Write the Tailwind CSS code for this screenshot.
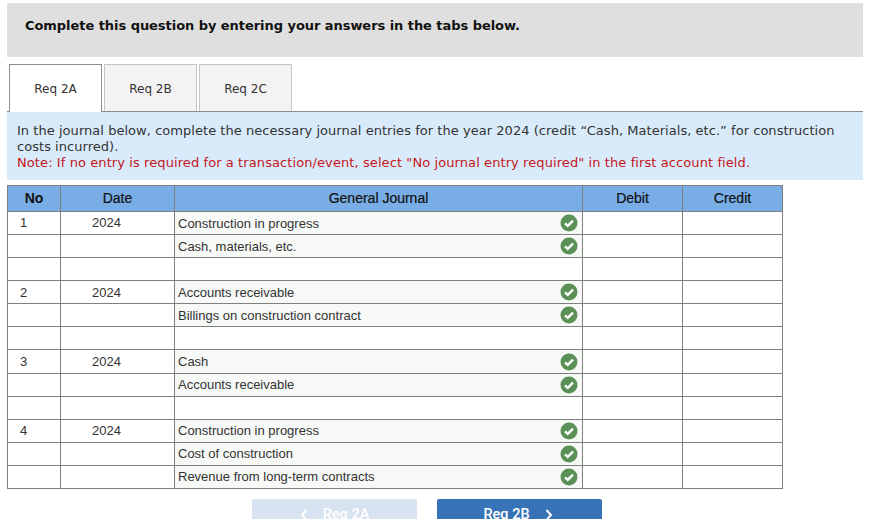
<!DOCTYPE html>
<html lang="en">
<head>
    <meta charset="UTF-8">
    <title>Journal entries</title>
    <script src="https://cdn.jsdelivr.net/npm/@tailwindcss/browser@4"></script>
</head>
<body class="bg-white overflow-hidden h-[519px] font-['DejaVu_Sans',sans-serif]">
    <div class="w-[856px] ml-[7px] pt-[3px]">
        <div class="h-[54px] bg-[#dfdfdf] pl-[18px] pt-[14px] text-[13px] leading-[17px] font-bold tracking-[-0.05px] text-[#111]">Complete this question by entering your answers in the tabs below.</div>

        <div class="flex items-end gap-[2px] pl-[2px] mt-[7px] h-[48px] border-b border-[#8c8c8c]">
            <div class="relative w-[93px] h-[48px] -mb-px bg-white border border-b-0 border-[#8c8c8c] flex items-center justify-center text-[12px] text-[#333]">Req 2A</div>
            <div class="w-[93px] h-[47px] pt-px bg-[#f3f3f3] border border-b-0 border-[#c4c4c4] flex items-center justify-center text-[12px] text-[#333]">Req 2B</div>
            <div class="w-[93px] h-[47px] pt-px bg-[#f3f3f3] border border-b-0 border-[#c4c4c4] flex items-center justify-center text-[12px] text-[#333]">Req 2C</div>
        </div>

        <div class="h-[68px] bg-[#d9ebfb] px-[10px] pt-[11px] text-[13px] leading-[16px] text-[#333]">
            <p class="tracking-[0.04px]">In the journal below, complete the necessary journal entries for the year 2024 (credit “Cash, Materials, etc.” for construction costs incurred).</p>
            <p class="tracking-[0.09px] text-[#c4161c]">Note: If no entry is required for a transaction/event, select "No journal entry required" in the first account field.</p>
        </div>

        <table class="mt-[5px] w-[776px] table-fixed border-collapse font-['Liberation_Sans',sans-serif] text-[13px] text-[#333] [&_td]:border [&_td]:border-[#7f7f7f] [&_td]:p-0 [&_th]:border [&_th]:border-[#7f7f7f] [&_tr]:h-[23.08px]">
            <colgroup>
                <col class="w-[53px]"><col class="w-[114px]"><col class="w-[408px]"><col class="w-[100px]"><col class="w-[100px]">
            </colgroup>
            <thead>
                <tr class="!h-[26px] bg-[#78ade6] text-[14px] text-[#111]">
                    <th class="font-bold">No</th><th class="font-normal [-webkit-text-stroke:0.2px]">Date</th><th class="font-normal [-webkit-text-stroke:0.2px]">General Journal</th><th class="font-normal [-webkit-text-stroke:0.2px]">Debit</th><th class="font-normal [-webkit-text-stroke:0.2px]">Credit</th>
                </tr>
            </thead>
            <tbody>
                <tr><td class="pl-[12px]!">1</td><td class="text-center pr-[22px]!">2024</td><td class="bg-[#f7f9f6]"><div class="flex items-center justify-between pl-[3px] pr-[4px]"><span class="pt-[2px]">Construction in progress</span><svg class="w-[18px] h-[18px]" viewBox="0 0 18 18"><circle cx="9" cy="9" r="8.5" fill="#5b9057"/><path d="M5 9.3l2.8 2.6L13 6.6" fill="none" stroke="#fff" stroke-width="2.4"/></svg></div></td><td></td><td></td></tr>
                <tr><td></td><td></td><td class="bg-[#f7f9f6]"><div class="flex items-center justify-between pl-[3px] pr-[4px]"><span class="pt-[2px]">Cash, materials, etc.</span><svg class="w-[18px] h-[18px]" viewBox="0 0 18 18"><circle cx="9" cy="9" r="8.5" fill="#5b9057"/><path d="M5 9.3l2.8 2.6L13 6.6" fill="none" stroke="#fff" stroke-width="2.4"/></svg></div></td><td></td><td></td></tr>
                <tr><td></td><td></td><td></td><td></td><td></td></tr>

                <tr><td class="pl-[12px]!">2</td><td class="text-center pr-[22px]!">2024</td><td class="bg-[#f7f9f6]"><div class="flex items-center justify-between pl-[3px] pr-[4px]"><span>Accounts receivable</span><svg class="w-[18px] h-[18px]" viewBox="0 0 18 18"><circle cx="9" cy="9" r="8.5" fill="#5b9057"/><path d="M5 9.3l2.8 2.6L13 6.6" fill="none" stroke="#fff" stroke-width="2.4"/></svg></div></td><td></td><td></td></tr>
                <tr><td></td><td></td><td class="bg-[#f7f9f6]"><div class="flex items-center justify-between pl-[3px] pr-[4px]"><span>Billings on construction contract</span><svg class="w-[18px] h-[18px]" viewBox="0 0 18 18"><circle cx="9" cy="9" r="8.5" fill="#5b9057"/><path d="M5 9.3l2.8 2.6L13 6.6" fill="none" stroke="#fff" stroke-width="2.4"/></svg></div></td><td></td><td></td></tr>
                <tr><td></td><td></td><td></td><td></td><td></td></tr>

                <tr><td class="pl-[12px]!">3</td><td class="text-center pr-[22px]!">2024</td><td class="bg-[#f7f9f6]"><div class="flex items-center justify-between pl-[3px] pr-[4px]"><span>Cash</span><svg class="w-[18px] h-[18px]" viewBox="0 0 18 18"><circle cx="9" cy="9" r="8.5" fill="#5b9057"/><path d="M5 9.3l2.8 2.6L13 6.6" fill="none" stroke="#fff" stroke-width="2.4"/></svg></div></td><td></td><td></td></tr>
                <tr><td></td><td></td><td class="bg-[#f7f9f6]"><div class="flex items-center justify-between pl-[3px] pr-[4px]"><span>Accounts receivable</span><svg class="w-[18px] h-[18px]" viewBox="0 0 18 18"><circle cx="9" cy="9" r="8.5" fill="#5b9057"/><path d="M5 9.3l2.8 2.6L13 6.6" fill="none" stroke="#fff" stroke-width="2.4"/></svg></div></td><td></td><td></td></tr>
                <tr><td></td><td></td><td></td><td></td><td></td></tr>

                <tr><td class="pl-[12px]!">4</td><td class="text-center pr-[22px]!">2024</td><td class="bg-[#f7f9f6]"><div class="flex items-center justify-between pl-[3px] pr-[4px]"><span>Construction in progress</span><svg class="w-[18px] h-[18px]" viewBox="0 0 18 18"><circle cx="9" cy="9" r="8.5" fill="#5b9057"/><path d="M5 9.3l2.8 2.6L13 6.6" fill="none" stroke="#fff" stroke-width="2.4"/></svg></div></td><td></td><td></td></tr>
                <tr><td></td><td></td><td class="bg-[#f7f9f6]"><div class="flex items-center justify-between pl-[3px] pr-[4px]"><span>Cost of construction</span><svg class="w-[18px] h-[18px]" viewBox="0 0 18 18"><circle cx="9" cy="9" r="8.5" fill="#5b9057"/><path d="M5 9.3l2.8 2.6L13 6.6" fill="none" stroke="#fff" stroke-width="2.4"/></svg></div></td><td></td><td></td></tr>
                <tr><td></td><td></td><td class="bg-[#f7f9f6]"><div class="flex items-center justify-between pl-[3px] pr-[4px]"><span>Revenue from long-term contracts</span><svg class="w-[18px] h-[18px]" viewBox="0 0 18 18"><circle cx="9" cy="9" r="8.5" fill="#5b9057"/><path d="M5 9.3l2.8 2.6L13 6.6" fill="none" stroke="#fff" stroke-width="2.4"/></svg></div></td><td></td><td></td></tr>
            </tbody>
        </table>

        <div class="flex gap-[20px] ml-[245px] mt-[10px] font-['Roboto',sans-serif] font-medium text-[14.5px] leading-[17px] text-white">
            <div class="w-[165px] h-[40px] rounded-[2px] bg-[#d7e3f1] flex items-start justify-center pt-[7px] gap-[15px]"><svg class="w-[8px] h-[12px] mt-[3px]" viewBox="0 0 8 12"><path d="M6.5 1L2 6l4.5 5" fill="none" stroke="#fff" stroke-width="2"/></svg><span>Req 2A</span></div>
            <div class="w-[165px] h-[40px] rounded-[2px] bg-[#3873b8] flex items-start justify-center pt-[7px] pr-[3px] gap-[15px]"><span>Req 2B</span><svg class="w-[8px] h-[12px] mt-[3px]" viewBox="0 0 8 12"><path d="M1.5 1L6 6l-4.5 5" fill="none" stroke="#fff" stroke-width="2"/></svg></div>
        </div>
    </div>
</body>
</html>
